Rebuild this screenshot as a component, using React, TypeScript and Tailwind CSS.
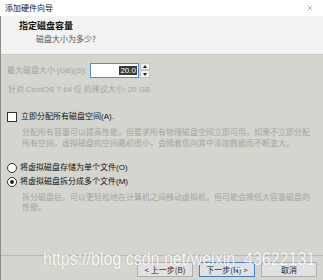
import { X } from "lucide-react";

const cjk = "font-['Noto_Sans_CJK_SC','Liberation_Sans',sans-serif]";

function Radio({ checked }: { checked?: boolean }) {
  return (
    <span className="w-[10px] h-[10px] rounded-full border border-[#333] bg-white flex items-center justify-center shrink-0">
      {checked && <span className="w-[4px] h-[4px] rounded-full bg-[#222]" />}
    </span>
  );
}

function Button({ label, primary }: { label: string; primary?: boolean }) {
  return (
    <div
      className={
        "w-[56px] h-[15px] flex items-center justify-center text-[8px] leading-none text-[#222] bg-[#e1e1e1] border " +
        (primary ? "border-[#3b7fd1]" : "border-[#adadad]")
      }
    >
      {label}
    </div>
  );
}

export default function App() {
  return (
    <div className={`relative w-[323px] h-[280px] flex flex-col overflow-hidden bg-[#d5d5d0] ${cjk}`}>
      {/* Title bar */}
      <div className="h-[16px] bg-white flex items-center justify-between pl-[5px] pr-[9px] shrink-0">
        <span className="text-[8px] leading-none text-[#111]">添加硬件向导</span>
        <X className="w-[8px] h-[8px] text-[#666]" strokeWidth={1.5} />
      </div>

      <div className="flex-1 flex flex-col border-l border-[#8c8c8c]">
        {/* Header */}
        <div className="h-[39px] bg-[#f2f2f2] border-b border-[#c8c8c4] pl-[18px] pt-[4px] shrink-0">
          <div className="text-[9px] leading-[11px] font-bold text-[#111]">指定磁盘容量</div>
          <div className="text-[8px] leading-[11px] text-[#555] pl-[17px] mt-[2px]">磁盘大小为多少?</div>
        </div>

        {/* Body */}
        <div className="flex-1 flex flex-col pl-[6px] pt-[8px]">
          <div className="flex items-center h-[15px]">
            <span className="w-[83px] text-[8px] leading-none text-[#a3a3a0]">
              最大磁盘大小 <span className="font-['Liberation_Sans',sans-serif]">(GB)(S):</span>
            </span>
            <div className="w-[49px] h-[15px] bg-white border border-[#4a8fd8] flex items-center justify-end pr-[1px]">
              <span className="bg-[#3a3a3a] text-white text-[8px] leading-[9px] px-[1px] font-['Liberation_Sans',sans-serif]">20.0</span>
            </div>
            <div className="w-[10px] h-[15px] flex flex-col ml-[1px]">
              <div className="h-[7px] bg-[#f4f4f4] border border-[#c8c8c8] flex items-center justify-center">
                <span className="w-0 h-0 border-l-[2px] border-r-[2px] border-b-[3px] border-l-transparent border-r-transparent border-b-[#222]" />
              </div>
              <div className="h-[8px] bg-[#f4f4f4] border border-[#c8c8c8] flex items-center justify-center">
                <span className="w-0 h-0 border-l-[2px] border-r-[2px] border-t-[3px] border-l-transparent border-r-transparent border-t-[#222]" />
              </div>
            </div>
          </div>
          <div className="mt-[5px] text-[8px] leading-[11px] text-[#a3a3a0] pl-[1px]">
            针对 <span className="font-['Liberation_Sans',sans-serif]">CentOS 7 64</span> 位 的建议大小:{" "}
            <span className="font-['Liberation_Sans',sans-serif]">20 GB</span>
          </div>

          <div className="mt-[16px] flex items-center gap-[4px] h-[11px]">
            <span className="w-[10px] h-[10px] border border-[#333] bg-white shrink-0" />
            <span className="text-[8px] leading-none text-[#111]">
              立即分配所有磁盘空间<span className="font-['Liberation_Sans',sans-serif]">(A).</span>
            </span>
          </div>
          <div className="mt-[4px] pl-[15px] pr-[8px] text-[8px] leading-[11px] text-[#a3a3a0]">
            分配所有容量可以提高性能，但要求所有物理磁盘空间立即可用，如果不立即分配所有空间，虚拟磁盘的空间最初很小，会随着您向其中添加数据而不断变大。
          </div>

          <div className="mt-[14px] flex items-center gap-[3px] h-[11px]">
            <Radio />
            <span className="text-[8px] leading-none text-[#111]">
              将虚拟磁盘存储为单个文件<span className="font-['Liberation_Sans',sans-serif]">(O)</span>
            </span>
          </div>
          <div className="mt-[3px] flex items-center gap-[3px] h-[11px]">
            <Radio checked />
            <span className="text-[8px] leading-none text-[#111]">
              将虚拟磁盘拆分成多个文件<span className="font-['Liberation_Sans',sans-serif]">(M)</span>
            </span>
          </div>
          <div className="mt-[5px] pl-[15px] pr-[8px] text-[8px] leading-[10px] text-[#a3a3a0]">
            拆分磁盘后，可以更轻松地在计算机之间移动虚拟机，但可能会降低大容量磁盘的性能。
          </div>
        </div>

        {/* Footer */}
        <div className="h-[25px] border-t border-[#b9b9b4] flex justify-end items-start pt-[6px] pr-[6px] gap-[6px] shrink-0">
          <Button label="< 上一步(B)" />
          <Button label="下一步(N) >" primary />
          <Button label="取消" />
        </div>
      </div>

      {/* Watermark */}
      <div className="absolute left-[43px] top-[250px] text-[16px] leading-none text-white/95 font-['Liberation_Sans',sans-serif] [text-shadow:0_0_1px_rgba(0,0,0,0.25)] scale-y-[1.12] origin-top-left">
        https://blog.csdn.net/weixin_43622131
      </div>
    </div>
  );
}
